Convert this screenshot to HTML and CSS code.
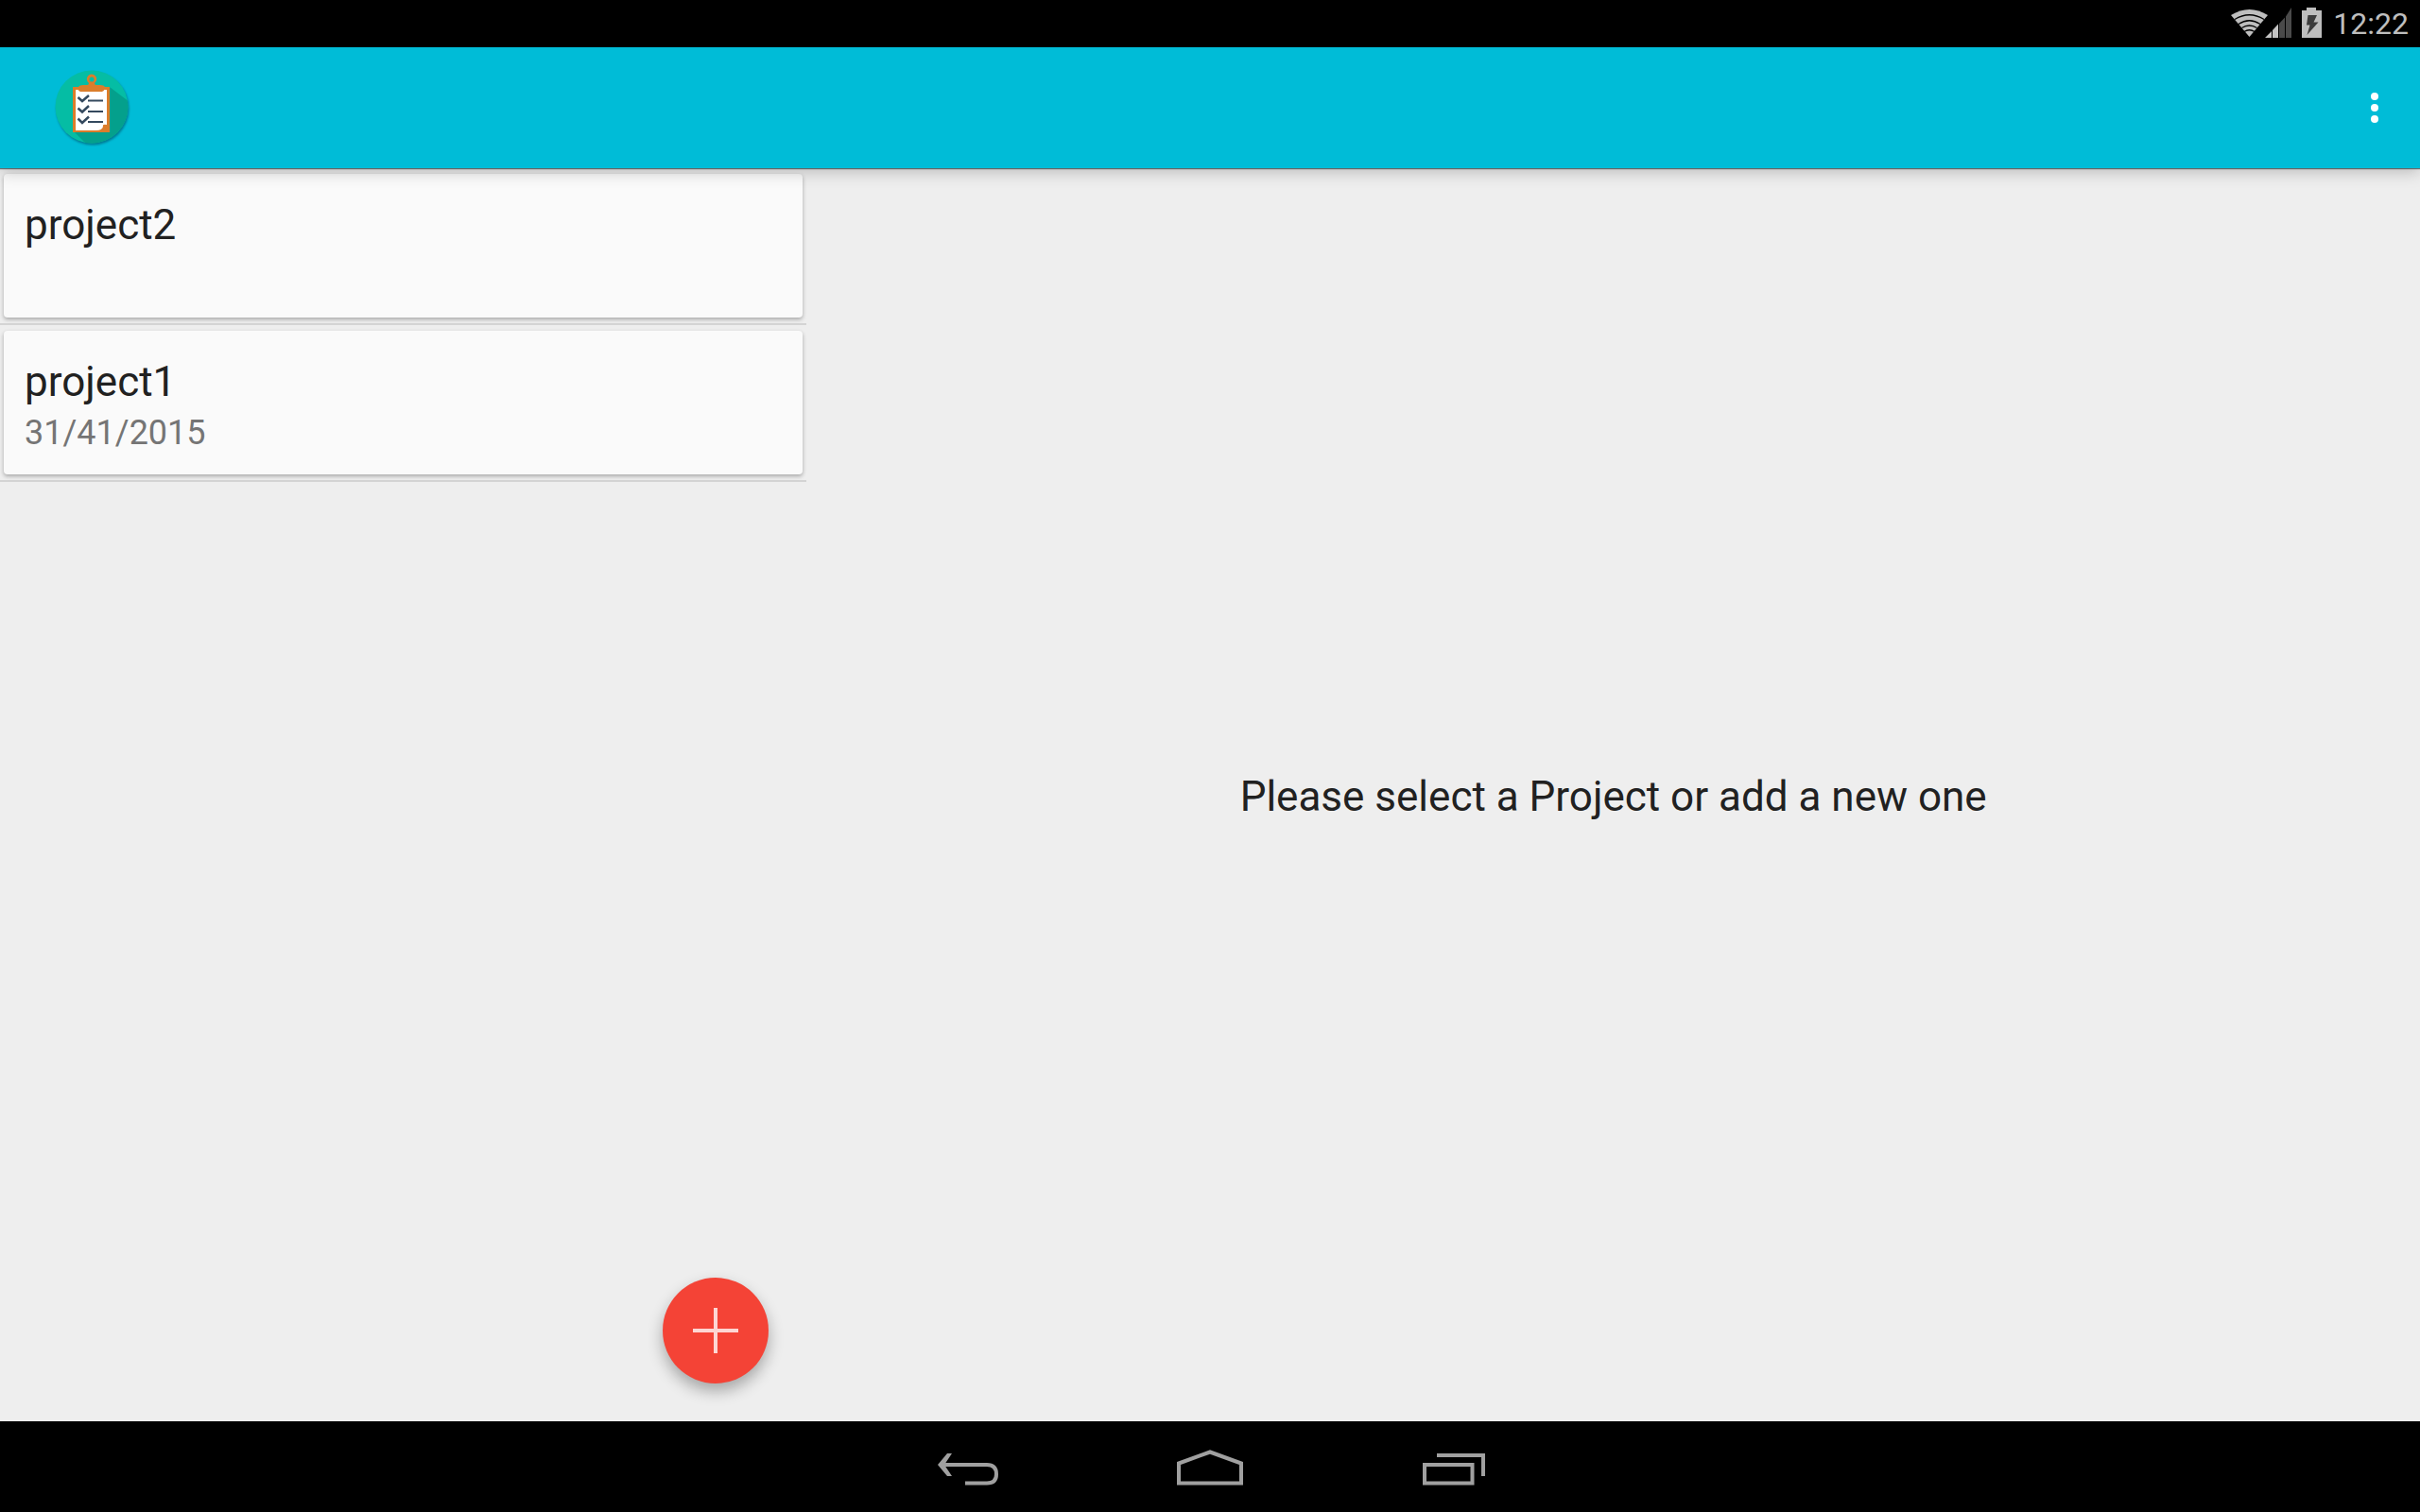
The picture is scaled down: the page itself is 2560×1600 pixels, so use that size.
FILE: index.html
```html
<!DOCTYPE html>
<html lang="en">
<head>
<meta charset="utf-8">
<title>Projects</title>
<link rel="stylesheet" href="styles.css">
</head>
<body>
<div class="status-bar">
  <svg class="status-icons" width="100" height="32" viewBox="0 0 100 32" aria-hidden="true">
    <path fill="#bebebe" d="M0 8 Q19.500 -4 39 8 L19.500 31Z"/>
    <g fill="none" stroke="#000" stroke-width="1.300">
      <path d="M4 12.500 Q19.500 3 35 12.500"/>
      <path d="M8 17.500 Q19.500 10 31 17.500"/>
      <path d="M11.500 21.500 Q19.500 16.500 27.500 21.500"/>
      <path d="M14 25.500 Q19.500 22 25 25.500"/>
    </g>
    <path fill="#4a4a4a" d="M51 17 L57 10.500 V32 H51Z M58 9.500 L64 0 V32 H58Z"/>
    <path fill="#c4c4c4" d="M36 32 L43 25 V32Z M44 24 L50 17.500 V32 H44Z"/>
    <path fill="#bebebe" d="M80 0 H90 V3 H96 V32 H75 V3 H80Z"/>
    <path fill="#3c3c3c" d="M81.500 8 H91 L87.500 15.500 H92.500 L80.500 29 L83.500 18.500 H80Z"/>
  </svg>
  <time class="clock">12:22</time>
</div>
<header class="app-bar">
  <svg class="logo" width="84" height="84" viewBox="0 0 84 84" role="img" aria-label="Project list">
    <defs><clipPath id="disc"><circle cx="42" cy="42" r="38.500"/></clipPath></defs>
    <circle class="logo-disc" cx="42" cy="42" r="38.500" fill="#05bda4"/>
    <path clip-path="url(#disc)" fill="#04a08c" d="M61 21 L90 43 V90 H45 L24 69 H61Z"/>
    <g transform="translate(0 1)">
      <path fill="#db7d2b" fill-rule="evenodd" d="M22 20 H28 Q29 18 33 18 H37 Q39 18 39 16 A5.200 5.200 0 1 1 45 16 Q45 18 47 18 H51 Q55 18 56 20 H61 V68 H22Z M42 9.500 A2.500 2.500 0 1 0 42 14.500 A2.500 2.500 0 1 0 42 9.500Z"/>
      <path fill="#fff" d="M25 23 H28 Q28 25 32 25 H51 Q55 25 55 23 H58 V60 Q53 59 54 62 Q53 66 47 66 H25Z"/>
      <g fill="none" stroke="#34495e">
        <path stroke-width="2" d="M38 34.500 H54 M38 46 H54 M38 57 H54"/>
        <path stroke-width="2.500" d="M27.500 31 L32 35 L39 29 M27.500 42.500 L32 46.500 L39 40 M27.500 53.500 L32 58 L39 51.500"/>
      </g>
    </g>
  </svg>
  <button class="overflow" type="button" aria-label="More options">
    <svg width="8" height="32" viewBox="0 0 8 32" fill="#fff"><circle cx="4" cy="4" r="4"/><circle cx="4" cy="16" r="4"/><circle cx="4" cy="28" r="4"/></svg>
  </button>
</header>
<main class="panes">
  <section class="list-pane" aria-label="Projects">
    <ul class="projects">
      <li class="item"><a class="card" href="#project2"><span class="name">project2</span></a></li>
      <li class="item"><a class="card" href="#project1"><span class="name">project1</span><span class="date">31/41/2015</span></a></li>
    </ul>
    <button class="fab" type="button" aria-label="Add project">
      <svg width="48" height="48" viewBox="0 0 48 48" fill="#fdd6d3"><path d="M22 0 H26 V22 H48 V26 H26 V48 H22 V26 H0 V22 H22Z"/></svg>
    </button>
  </section>
  <section class="detail-pane">
    <p class="message">Please select a Project or add a new one</p>
  </section>
</main>
<nav class="nav-bar" aria-label="System">
  <button class="nav-button" type="button" aria-label="Back">
    <svg width="72" height="40" viewBox="0 0 72 40"><path fill="none" stroke="#a0a0a0" stroke-width="4" d="M33 35.500 H56 Q66 35.500 66 26 Q66 16 56 16 H7"/><path fill="#a0a0a0" d="M14 4 H19 L11 16 L19 28 H14 L4 16Z"/></svg>
  </button>
  <button class="nav-button" type="button" aria-label="Home">
    <svg width="72" height="40" viewBox="0 0 72 40"><path fill="none" stroke="#a0a0a0" stroke-width="4" d="M3 35.500 V14.500 L36 2.500 L69 14.500 V35.500Z"/></svg>
  </button>
  <button class="nav-button" type="button" aria-label="Recent apps">
    <svg width="72" height="40" viewBox="0 0 72 40"><path fill="none" stroke="#a0a0a0" stroke-width="4" d="M7 16 H57.500 V35.500 H7Z M20 6 H69 V28"/></svg>
  </button>
</nav>
</body>
</html>
```
FILE: styles.css
```css
* {
  box-sizing: border-box;
}

body {
  margin: 0;
  min-height: 100vh;
  display: flex;
  flex-direction: column;
  background: #eee;
  color: #212121;
  font-family: Roboto, "Noto Sans", sans-serif;
}

button {
  display: flex;
  align-items: center;
  justify-content: center;
  padding: 0;
  border: 0;
  background: none;
  cursor: pointer;
}

.status-bar {
  display: flex;
  align-items: center;
  justify-content: flex-end;
  gap: 8px;
  height: 50px;
  padding-right: 12px;
  background: #000;
}

.status-icons {
  margin-bottom: 2px;
}

.clock {
  color: #bebebe;
  font-size: 32px;
  line-height: 38px;
}

.app-bar {
  position: relative;
  z-index: 1;
  display: flex;
  align-items: center;
  justify-content: space-between;
  height: 128px;
  padding: 0 16px 0 55px;
  background: #00bcd7;
  box-shadow: 0 1px 1px rgba(0, 0, 0, 0.5), 0 4px 16px rgba(0, 0, 0, 0.22);
}

.logo {
  margin-bottom: 2px;
}

.logo-disc {
  filter: drop-shadow(1px 2px 1px rgba(0, 60, 80, 0.5));
}

.overflow {
  width: 64px;
  height: 96px;
}

.panes {
  flex: 1;
  display: grid;
  grid-template-columns: 1fr 2fr;
}

.list-pane {
  display: flex;
  flex-direction: column;
  justify-content: space-between;
}

.projects {
  margin: 0;
  padding: 0;
  list-style: none;
}

.item {
  padding: 6px 4px;
  border-bottom: 2px solid #d4d4d4;
}

.card {
  display: flex;
  flex-direction: column;
  gap: 7px;
  min-height: 152px;
  padding: 28px 22px 22px;
  border-radius: 4px;
  background: #fafafa;
  box-shadow: 0 2px 4px rgba(0, 0, 0, 0.3);
  color: inherit;
  text-decoration: none;
}

.name,
.message {
  font-size: 44px;
  line-height: 52px;
}

.date {
  color: #757575;
  font-size: 36px;
  line-height: 42px;
}

.fab {
  align-self: flex-end;
  width: 112px;
  height: 112px;
  margin: 40px;
  border-radius: 50%;
  background: #f44336;
  box-shadow: 0 8px 16px rgba(0, 0, 0, 0.3);
}

.detail-pane {
  display: flex;
  align-items: center;
  justify-content: center;
  padding-top: 4px;
}

.message {
  margin: 0;
}

.nav-bar {
  display: flex;
  justify-content: center;
  gap: 96px;
  height: 96px;
  padding-top: 4px;
  background: #000;
}

.nav-button {
  width: 160px;
}
```
